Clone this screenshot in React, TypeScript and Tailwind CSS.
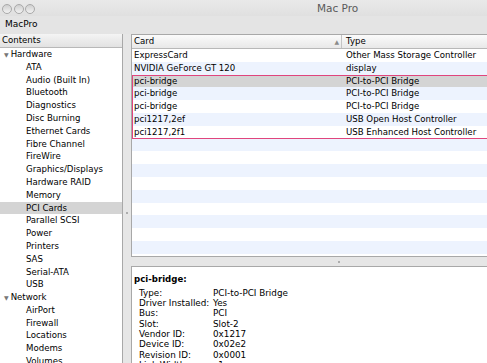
const hardware = [
    "ATA",
    "Audio (Built In)",
    "Bluetooth",
    "Diagnostics",
    "Disc Burning",
    "Ethernet Cards",
    "Fibre Channel",
    "FireWire",
    "Graphics/Displays",
    "Hardware RAID",
    "Memory",
    "PCI Cards",
    "Parallel SCSI",
    "Power",
    "Printers",
    "SAS",
    "Serial-ATA",
    "USB",
];

const network = ["AirPort", "Firewall", "Locations", "Modems", "Volumes"];

const cards = [
    { card: "ExpressCard", type: "Other Mass Storage Controller" },
    { card: "NVIDIA GeForce GT 120", type: "display" },
    { card: "pci-bridge", type: "PCI-to-PCI Bridge" },
    { card: "pci-bridge", type: "PCI-to-PCI Bridge" },
    { card: "pci-bridge", type: "PCI-to-PCI Bridge" },
    { card: "pci1217,2ef", type: "USB Open Host Controller" },
    { card: "pci1217,2f1", type: "USB Enhanced Host Controller" },
];

const details = [
    ["Type:", "PCI-to-PCI Bridge"],
    ["Driver Installed:", "Yes"],
    ["Bus:", "PCI"],
    ["Slot:", "Slot-2"],
    ["Vendor ID:", "0x1217"],
    ["Device ID:", "0x02e2"],
    ["Revision ID:", "0x0001"],
    ["Link Width:", "x1"],
];

function Light() {
    return (
        <div className="w-[10px] h-[10px] rounded-full border border-[#a9a9a9] bg-gradient-to-b from-[#cfcfcf] to-[#f2f2f2]" />
    );
}

function Row({ card, type, index }: { card: string; type: string; index: number }) {
    const bg = index === 2 ? "bg-[#d4d4d4]" : index % 2 === 1 ? "bg-[#edf3fe]" : "bg-white";
    return (
        <div className={`flex h-[12.8px] shrink-0 items-center ${bg}`}>
            <div className="w-[210px] pl-[2px] whitespace-nowrap">{card}</div>
            <div className="flex-1 pl-[4px] whitespace-nowrap">{type}</div>
        </div>
    );
}

export default function App() {
    const empty = Array.from({ length: 10 }, (_, i) => i + 7);

    return (
        <div className="w-[487px] h-[363px] overflow-hidden flex flex-col bg-[#e6e6e6] text-[8.6px] text-black font-['DejaVu_Sans',sans-serif]">
            {/* Title bar */}
            <div className="h-[16px] flex items-center bg-gradient-to-b from-[#e9e9e9] to-[#e0e0e0]">
                <div className="flex gap-[1.5px] pl-[2px] pt-[1px]">
                    <Light />
                    <Light />
                    <Light />
                </div>
                <div className="ml-[282px] text-[10.5px] text-[#5a5a5a] pt-[1px]">Mac Pro</div>
            </div>

            {/* Toolbar */}
            <div className="h-[18px] flex items-center pl-[5px] text-[9px] bg-[#e4e4e4]">MacPro</div>

            <div className="flex-1 flex min-h-0">
                {/* Sidebar */}
                <div className="w-[123px] bg-white border-r border-[#a8a8a8] flex flex-col overflow-hidden">
                    <div className="h-[14px] shrink-0 flex items-center pl-[2px] bg-gradient-to-b from-[#f4f4f4] to-[#e2e2e2] border-b border-[#b8b8b8]">
                        Contents
                    </div>
                    <div className="h-[12.8px] flex items-center pl-[4px] gap-[2px] shrink-0">
                        <span className="text-[6px] text-[#777]">▼</span>Hardware
                    </div>
                    {hardware.map((item) => (
                        <div
                            key={item}
                            className={`h-[12.8px] flex items-center pl-[26px] shrink-0 ${item === "PCI Cards" ? "bg-[#d4d4d4]" : ""}`}
                        >
                            {item}
                        </div>
                    ))}
                    <div className="h-[12.8px] flex items-center pl-[4px] gap-[2px] shrink-0">
                        <span className="text-[6px] text-[#777]">▼</span>Network
                    </div>
                    {network.map((item) => (
                        <div key={item} className="h-[12.8px] flex items-center pl-[26px] shrink-0">
                            {item}
                        </div>
                    ))}
                </div>

                {/* Vertical splitter */}
                <div className="w-[8px] flex items-center justify-center">
                    <div className="w-[2px] h-[2px] rounded-full bg-[#9a9a9a] mt-[28px]" />
                </div>

                {/* Right side */}
                <div className="flex-1 flex flex-col min-w-0">
                    <div className="h-[223px] shrink-0 bg-white border border-r-0 border-[#a8a8a8] flex flex-col overflow-hidden">
                        <div className="h-[14px] shrink-0 flex items-center bg-gradient-to-b from-[#fbfbfb] to-[#e8e8e8] border-b border-[#b8b8b8]">
                            <div className="w-[210px] pl-[2px] flex items-center justify-between border-r border-[#c4c4c4] h-full">
                                <span>Card</span>
                                <span className="text-[6px] text-[#8a8a8a] pr-[2px]">▲</span>
                            </div>
                            <div className="pl-[4px]">Type</div>
                        </div>
                        {cards.slice(0, 2).map((c, i) => (
                            <Row key={i} card={c.card} type={c.type} index={i} />
                        ))}
                        {/* Highlighted group */}
                        <div className="flex flex-col shrink-0 -mr-[4px] relative z-10 outline-[1.5px] outline-solid outline-[#e0457d] -outline-offset-1">
                            {cards.slice(2).map((c, i) => (
                                <Row key={i + 2} card={c.card} type={c.type} index={i + 2} />
                            ))}
                        </div>
                        {empty.map((i) => (
                            <div key={i} className={`h-[12.8px] shrink-0 ${i % 2 === 1 ? "bg-[#edf3fe]" : "bg-white"}`} />
                        ))}
                    </div>

                    {/* Horizontal splitter */}
                    <div className="h-[9px] shrink-0 flex items-center justify-center">
                        <div className="w-[2px] h-[2px] rounded-full bg-[#9a9a9a] ml-[60px]" />
                    </div>

                    {/* Detail */}
                    <div className="flex-1 bg-white border-t border-l border-[#a8a8a8] pl-[2px] pt-[6px]">
                        <div className="font-bold">pci-bridge:</div>
                        <div className="pt-[2px] pl-[5px] leading-[10.3px] text-[8.8px]">
                            {details.map(([k, v]) => (
                                <div key={k} className="flex">
                                    <div className="w-[74px]">{k}</div>
                                    <div>{v}</div>
                                </div>
                            ))}
                        </div>
                    </div>
                </div>
            </div>
        </div>
    );
}
